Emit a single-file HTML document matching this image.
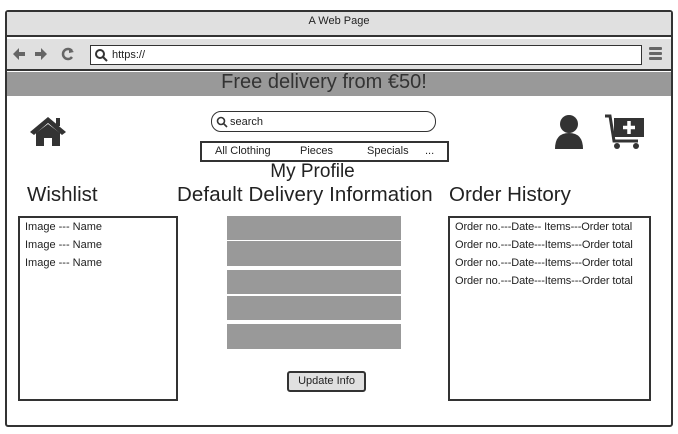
<!DOCTYPE html>
<html><head><style>
*{margin:0;padding:0;box-sizing:border-box}
body{width:678px;height:434px;background:#fff;position:relative;overflow:hidden;font-family:"Comic Sans MS","Liberation Sans",sans-serif;color:#222}
.a{position:absolute}
.t{font-size:11px;white-space:nowrap}
.g{background:#999;left:227px;width:174px}
</style></head><body>
<div class="a" style="left:5px;top:10px;width:668px;height:417px;border:2px solid #333;border-radius:3px"></div>
<div class="a" style="left:7px;top:12px;width:664px;height:25px;background:#e0e0e0;border-bottom:2px solid #333"></div>
<div class="a t" style="left:0;width:678px;top:15px;text-align:center;font-size:11px">A Web Page</div>
<div class="a" style="left:7px;top:39px;width:664px;height:32px;background:#e0e0e0;border-bottom:2px solid #333"></div>
<svg class="a" style="left:12px;top:47px" width="64" height="14"><path d="M1 7 L7 1 L7 5 L13 5 L13 9 L7 9 L7 13 Z" fill="#666"/><path d="M35 7 L29 1 L29 5 L23 5 L23 9 L29 9 L29 13 Z" fill="#666"/><path d="M60 4 A5 5 0 1 0 60 10" fill="none" stroke="#666" stroke-width="2.5"/><path d="M57 1 L62 5 L57 6 Z" fill="#666"/></svg>
<div class="a" style="left:90px;top:45px;width:552px;height:20px;background:#fff;border:1px solid #333"></div>
<svg class="a" style="left:94px;top:48px" width="14" height="14"><circle cx="6" cy="6" r="4" fill="none" stroke="#333" stroke-width="2"/><line x1="9" y1="9" x2="13" y2="13" stroke="#333" stroke-width="2"/></svg>
<div class="a t" style="left:112px;top:49px">https://</div>
<div class="a" style="left:649px;top:47px;width:13px;height:3px;background:#666;box-shadow:0 5px 0 #666,0 10px 0 #666;border-radius:1px"></div>
<div class="a" style="left:7px;top:72px;width:664px;height:24px;background:#999"></div>
<div class="a" style="left:0;width:648px;top:71px;text-align:center;font-size:20px;color:#333">Free delivery from €50!</div>
<svg class="a" style="left:29px;top:115px" width="38" height="32"><path d="M19 2 L37 17 L33 20 L19 8 L5 20 L1 17 Z" fill="#333"/><path d="M7 18 L19 9 L31 18 L31 31 L23 31 L23 23 L15 23 L15 31 L7 31 Z" fill="#333"/><rect x="27" y="3" width="4" height="8" fill="#333"/></svg>
<div class="a" style="left:211px;top:111px;width:225px;height:21px;border:1.5px solid #333;border-radius:10px"></div>
<svg class="a" style="left:216px;top:116px" width="12" height="12"><circle cx="5" cy="5" r="3.5" fill="none" stroke="#333" stroke-width="1.6"/><line x1="7.5" y1="7.5" x2="11" y2="11" stroke="#333" stroke-width="1.6"/></svg>
<div class="a t" style="left:230px;top:116px">search</div>
<div class="a" style="left:200px;top:141px;width:249px;height:21px;border:2px solid #333"></div>
<div class="a t" style="left:215px;top:145px">All Clothing</div>
<div class="a t" style="left:300px;top:145px">Pieces</div>
<div class="a t" style="left:367px;top:145px">Specials</div>
<div class="a t" style="left:425px;top:145px">...</div>
<svg class="a" style="left:553px;top:113px" width="32" height="36"><circle cx="16" cy="11" r="9" fill="#333"/><path d="M2 36 Q2 20 16 20 Q30 20 30 36 Z" fill="#333"/></svg>
<svg class="a" style="left:604px;top:114px" width="42" height="36"><path d="M1 2 L6 2 L10 27 L34 27" fill="none" stroke="#333" stroke-width="3"/><rect x="10" y="4" width="30" height="19" fill="#333"/><path d="M25 7 V20 M19 13.5 H31" stroke="#fff" stroke-width="3.5"/><circle cx="13" cy="32" r="3" fill="#333"/><circle cx="32" cy="32" r="3" fill="#333"/></svg>
<div class="a" style="left:0;width:625px;top:161px;text-align:center;font-size:19px">My Profile</div>
<div class="a" style="left:27px;top:183px;font-size:20.5px">Wishlist</div>
<div class="a" style="left:177px;top:183px;font-size:20.5px;white-space:nowrap;letter-spacing:0.1px">Default Delivery Information</div>
<div class="a" style="left:449px;top:183px;font-size:20.5px">Order History</div>
<div class="a" style="left:18px;top:216px;width:160px;height:185px;border:2px solid #333"></div>
<div class="a t" style="left:25px;top:218px;line-height:18px">Image --- Name<br>Image --- Name<br>Image --- Name</div>
<div class="a" style="left:448px;top:216px;width:203px;height:185px;border:2px solid #333"></div>
<div class="a t" style="left:455px;top:218px;line-height:18px;font-size:11px;letter-spacing:-0.1px">Order no.---Date-- Items---Order total<br>Order no.---Date---Items---Order total<br>Order no.---Date---Items---Order total<br>Order no.---Date---Items---Order total</div>
<div class="a g" style="top:216px;height:24px"></div>
<div class="a g" style="top:241px;height:25px"></div>
<div class="a g" style="top:270px;height:24px"></div>
<div class="a g" style="top:296px;height:24px"></div>
<div class="a g" style="top:324px;height:25px"></div>
<div class="a" style="left:287px;top:371px;width:79px;height:21px;background:#e0e0e0;border:2px solid #333;border-radius:3px"></div>
<div class="a t" style="left:287px;width:79px;top:375px;text-align:center">Update Info</div>
</body></html>
